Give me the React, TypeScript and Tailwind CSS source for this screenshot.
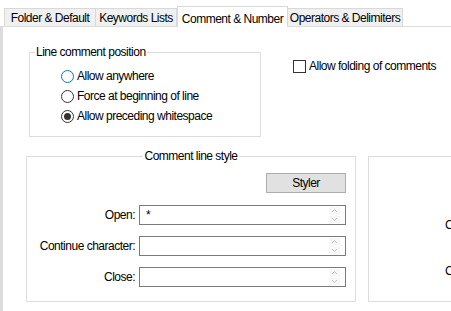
import React from 'react';

const font = { fontFamily: '"Liberation Sans", Arial, sans-serif' };

const Tab: React.FC<{ label: string; active?: boolean; w: string }> = ({ label, active, w }) =>
  active ? (
    <div className={`${w} shrink-0 h-[21px] -mb-px relative z-10 bg-white border border-b-0 border-[#d9d9d9] flex items-start justify-center pt-[3px] text-[12px] text-black whitespace-nowrap`}>
      {label}
    </div>
  ) : (
    <div className={`${w} shrink-0 h-[18px] bg-[#f0f0f0] border border-b-0 border-[#d9d9d9] flex items-center justify-center text-[12px] text-black whitespace-nowrap`}>
      {label}
    </div>
  );

const Radio: React.FC<{ label: string; checked?: boolean; focus?: boolean }> = ({ label, checked, focus }) => (
  <div className="flex items-center h-[20px]">
    <span
      className={`w-[13px] h-[13px] rounded-full border flex items-center justify-center bg-white ${
        focus ? 'border-[#0078d7]' : 'border-[#333333]'
      }`}
    >
      {checked && <span className="w-[7px] h-[7px] rounded-full bg-[#333333]" />}
    </span>
    <span className="ml-[3px] text-[12px] text-black whitespace-nowrap">{label}</span>
  </div>
);

const Spin: React.FC = () => (
  <svg width="11" height="16" viewBox="0 0 11 16" className="mr-[5px]">
    <rect x="0" y="0" width="11" height="7.5" fill="#f7f7f7" />
    <rect x="0" y="8.5" width="11" height="7.5" fill="#f7f7f7" />
    <path d="M3 5 L5.5 2.5 L8 5" fill="none" stroke="#c2c2c2" strokeWidth="1" />
    <path d="M3 11 L5.5 13.5 L8 11" fill="none" stroke="#c2c2c2" strokeWidth="1" />
  </svg>
);

const Field: React.FC<{ label: string; value?: string }> = ({ label, value }) => (
  <div className="flex items-center h-[20px]">
    <span className="w-[112px] shrink-0 text-right pr-[4px] text-[12px] text-black whitespace-nowrap">{label}</span>
    <div className="w-[207px] shrink-0 h-[20px] border border-[#7a7a7a] bg-white flex items-center justify-between">
      <span className="pl-[6px] text-[12px] text-black leading-none">{value}</span>
      <Spin />
    </div>
  </div>
);

export default function App() {
  return (
    <div className="w-[451px] h-[311px] bg-white overflow-hidden tracking-[-0.5px]" style={font}>
      <div className="h-[26px] flex items-end pl-[4px]">
        <Tab label="Folder & Default" w="w-[92px]" />
        <div className="-ml-px">
          <Tab label="Keywords Lists" w="w-[82px]" />
        </div>
        <Tab label="Comment & Number" w="w-[111px]" active />
        <div className="-ml-px">
          <Tab label="Operators & Delimiters" w="w-[116px]" />
        </div>
      </div>
      <div className="h-[285px] border-t border-l-[3px] border-[#dcdcdc] relative">
        <div className="flex items-start pt-[25px]">
          <div className="ml-[26px] shrink-0 w-[232px] h-[85px] border border-[#dcdcdc] relative">
            <span className="absolute -top-[8px] left-[5px] bg-white px-[1px] text-[12px] leading-[14px] text-black whitespace-nowrap">
              Line comment position
            </span>
            <div className="pl-[31px] pt-[13px] flex flex-col">
              <Radio label="Allow anywhere" focus />
              <Radio label="Force at beginning of line" />
              <Radio label="Allow preceding whitespace" checked />
            </div>
          </div>
          <div className="ml-[32px] mt-[5px] flex items-center">
            <span className="w-[13px] h-[13px] border border-[#333333] bg-white shrink-0" />
            <span className="ml-[3px] text-[12px] text-black whitespace-nowrap">Allow folding of comments</span>
          </div>
        </div>
        <div className="flex items-start mt-[19px]">
          <div className="ml-[23px] shrink-0 w-[330px] h-[146px] border border-[#dcdcdc] relative">
            <span className="absolute -top-[8px] left-0 right-0 flex justify-center">
              <span className="bg-white px-[1px] text-[12px] leading-[14px] text-black">Comment line style</span>
            </span>
            <div className="flex justify-end pr-[9px] pt-[16px]">
              <div className="w-[80px] h-[20px] bg-[#e1e1e1] border border-[#adadad] flex items-center justify-center text-[12px] text-black">
                Styler
              </div>
            </div>
            <div className="flex flex-col gap-[11px] mt-[12px]">
              <Field label="Open:" value="*" />
              <Field label="Continue character:" />
              <Field label="Close:" />
            </div>
          </div>
          <div className="ml-[12px] shrink-0 w-[120px] h-[146px] border border-[#dcdcdc] flex flex-col">
            <span className="mt-[59px] ml-[76px] text-[12px] text-black">C</span>
            <span className="mt-[28px] ml-[76px] text-[12px] text-black">C</span>
          </div>
        </div>
      </div>
    </div>
  );
}
